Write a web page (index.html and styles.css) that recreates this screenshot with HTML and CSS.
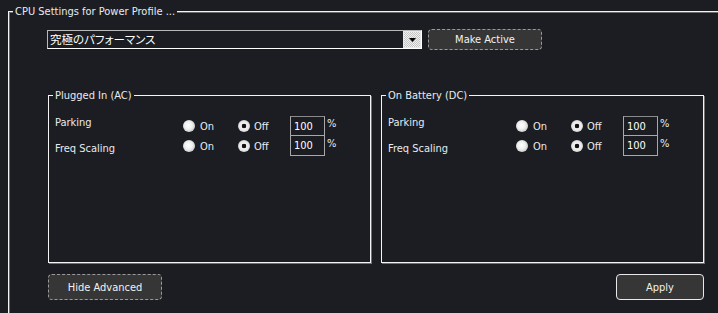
FILE: index.html
```html
<!DOCTYPE html>
<html>
<head>
<meta charset="utf-8">
<link rel="stylesheet" href="styles.css">
</head>
<body>
<div class="outer">
  <div class="group-title outer-title">CPU Settings for Power Profile ...</div>
  <div class="top-row">
    <div class="select">
      <span class="select-text">究極のパフォーマンス</span>
      <span class="select-arrow"><svg width="7" height="4" viewBox="0 0 7 4"><polygon points="0,0 7,0 3.5,4" fill="#000"/></svg></span>
    </div>
    <div class="btn btn-make">Make Active</div>
  </div>
  <div class="panels">
    <div class="panel">
      <div class="group-title panel-title">Plugged In (AC)</div>
      <div class="panel-body">
        <div class="labels">
          <div class="label">Parking</div>
          <div class="label">Freq Scaling</div>
        </div>
        <div class="controls">
          <div class="ctrl-row">
            <div class="opt opt-on"><span class="radio"></span><span>On</span></div>
            <div class="opt opt-off"><span class="radio checked"></span><span>Off</span></div>
            <div class="num">100</div><span class="pct">%</span>
          </div>
          <div class="ctrl-row">
            <div class="opt opt-on"><span class="radio"></span><span>On</span></div>
            <div class="opt opt-off"><span class="radio checked"></span><span>Off</span></div>
            <div class="num">100</div><span class="pct">%</span>
          </div>
        </div>
      </div>
    </div>
    <div class="panel">
      <div class="group-title panel-title">On Battery (DC)</div>
      <div class="panel-body">
        <div class="labels">
          <div class="label">Parking</div>
          <div class="label">Freq Scaling</div>
        </div>
        <div class="controls">
          <div class="ctrl-row">
            <div class="opt opt-on"><span class="radio"></span><span>On</span></div>
            <div class="opt opt-off"><span class="radio checked"></span><span>Off</span></div>
            <div class="num">100</div><span class="pct">%</span>
          </div>
          <div class="ctrl-row">
            <div class="opt opt-on"><span class="radio"></span><span>On</span></div>
            <div class="opt opt-off"><span class="radio checked"></span><span>Off</span></div>
            <div class="num">100</div><span class="pct">%</span>
          </div>
        </div>
      </div>
    </div>
  </div>
  <div class="bottom-row">
    <div class="btn btn-hide">Hide Advanced</div>
    <div class="btn btn-apply">Apply</div>
  </div>
  <div class="check"></div>
</div>
</body>
</html>
```

FILE: styles.css
```css
html, body {
  margin: 0;
  padding: 0;
  background: #1b1d22;
  overflow: hidden;
  height: 313px;
}
body {
  font-family: "DejaVu Sans Condensed", "Liberation Sans", sans-serif;
  font-size: 11px;
  color: #e8ebef;
}
.outer {
  position: relative;
  box-sizing: border-box;
  margin: 11px 0 0 8px;
  border-top: 1px solid #f4f4f4;
  border-left: 1px solid #f4f4f4;
  box-shadow: inset 1px 1px 0 #6a6a6a;
  padding: 17px 0 0 38px;
  height: 302px;
}
.group-title {
  position: absolute;
  background: #1b1d22;
  padding: 0 2px;
  line-height: 13px;
  white-space: nowrap;
}
.outer-title {
  top: -7px;
  left: 4px;
}
.top-row {
  display: flex;
  align-items: center;
  height: 21px;
}
.select {
  box-sizing: border-box;
  width: 375px;
  height: 19px;
  display: flex;
  align-items: center;
  border: 1px solid;
  border-color: #b8b8b8 #ffffff #ffffff #b8b8b8;
  padding: 0 0 0 2px;
}
.select-text {
  flex: 1;
  font-family: "Noto Sans CJK JP", sans-serif;
  font-size: 11.5px;
  font-feature-settings: "palt";
  color: #ffffff;
  line-height: 15px;
}
.select-arrow {
  box-sizing: border-box;
  width: 18px;
  height: 17px;
  display: flex;
  align-items: center;
  justify-content: center;
  background: repeating-conic-gradient(#f0f0f0 0 25%, #c4c4c4 0 50%) 0 0 / 2px 2px;
  border: 1px solid #e8e8e8;
}
.btn {
  box-sizing: border-box;
  display: flex;
  align-items: center;
  justify-content: center;
  background: #363636;
  border: 1px dashed #9a9a9a;
  border-radius: 4px;
  color: #f2f2f2;
  font-size: 11px;
}
.btn-make {
  margin-left: 6px;
  width: 114px;
  height: 21px;
}
.panels {
  display: flex;
  gap: 10px;
  margin-top: 45px;
  margin-left: 1px;
}
.panel {
  position: relative;
  box-sizing: border-box;
  width: 323px;
  height: 168px;
  border: 1px solid #f4f4f4;
  box-shadow: 1px 1px 0 #707070;
}
.panel-title {
  top: -7px;
  left: 4px;
}
.panel-body {
  display: flex;
  padding: 20px 0 0 6px;
}
.labels {
  width: 128px;
  display: flex;
  flex-direction: column;
  gap: 12px;
}
.label {
  line-height: 14px;
}
.controls {
  display: flex;
  flex-direction: column;
}
.ctrl-row {
  display: flex;
  align-items: flex-start;
  height: 20px;
}
.opt {
  display: flex;
  align-items: center;
  gap: 5px;
  height: 20px;
}
.opt-on { width: 55px; }
.opt-off { width: 52px; gap: 4px; }
.radio {
  box-sizing: border-box;
  width: 12px;
  height: 12px;
  border-radius: 50%;
  background: radial-gradient(circle at 45% 45%, #ffffff 0, #f0f0f0 40%, #c8c8c8 75%, #9a9a9a 100%);
}
.radio.checked {
  background: radial-gradient(circle, #111 0, #111 2px, #f2f2f2 2.6px, #e6e6e6 55%, #a8a8a8 100%);
}
.num {
  box-sizing: border-box;
  width: 35px;
  height: 20px;
  border: 1px solid #a8a8a8;
  border-top-color: #8a8a8a;
  padding: 3px 0 0 3px;
  line-height: 14px;
  color: #ffffff;
}
.ctrl-row + .ctrl-row .num {
  border-top: none;
}
.pct {
  margin-left: 2px;
  line-height: 12px;
  margin-top: 2px;
}
.bottom-row {
  display: flex;
  justify-content: space-between;
  width: 656px;
  margin-top: 11px;
  margin-left: 1px;
}
.btn-hide {
  width: 114px;
  height: 26px;
}
.btn-apply {
  width: 88px;
  height: 26px;
  border: 1px solid #e8e8e8;
}
.check {
  margin-top: 13px;
  margin-left: 1px;
  width: 12px;
  height: 1px;
  background: #d0d0d0;
}
```
